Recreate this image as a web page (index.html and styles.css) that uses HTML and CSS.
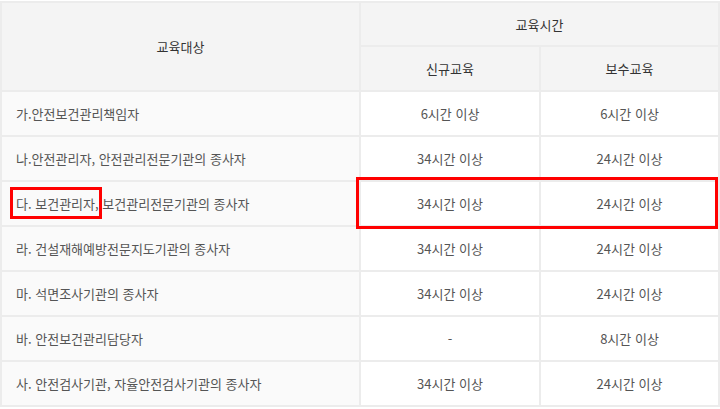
FILE: index.html
```html
<!DOCTYPE html>
<html lang="ko">
<head>
<meta charset="utf-8">
<link rel="stylesheet" href="styles.css">
</head>
<body>
<div class="wrap">
  <table class="edu">
    <colgroup>
      <col class="c-target">
      <col class="c-new">
      <col class="c-keep">
    </colgroup>
    <thead>
      <tr class="h1">
        <th rowspan="2">교육대상</th>
        <th colspan="2">교육시간</th>
      </tr>
      <tr class="h2">
        <th>신규교육</th>
        <th>보수교육</th>
      </tr>
    </thead>
    <tbody>
      <tr><td class="t">가.안전보건관리책임자</td><td>6시간 이상</td><td>6시간 이상</td></tr>
      <tr><td class="t">나.안전관리자, 안전관리전문기관의 종사자</td><td>34시간 이상</td><td>24시간 이상</td></tr>
      <tr><td class="t"><span class="mark">다. 보건관리자,</span> 보건관리전문기관의 종사자</td><td>34시간 이상</td><td>24시간 이상</td></tr>
      <tr><td class="t">라. 건설재해예방전문지도기관의 종사자</td><td>34시간 이상</td><td>24시간 이상</td></tr>
      <tr><td class="t">마. 석면조사기관의 종사자</td><td>34시간 이상</td><td>24시간 이상</td></tr>
      <tr><td class="t">바. 안전보건관리담당자</td><td>-</td><td>8시간 이상</td></tr>
      <tr><td class="t">사. 안전검사기관, 자율안전검사기관의 종사자</td><td>34시간 이상</td><td>24시간 이상</td></tr>
    </tbody>
  </table>
  <div class="row-mark"></div>
</div>
</body>
</html>
```

FILE: styles.css
```css
html, body {
  margin: 0;
  padding: 0;
  background: #ffffff;
}

.wrap {
  position: relative;
  width: 718px;
  padding-top: 1px;
  font-family: "Noto Sans CJK KR", "Noto Sans", sans-serif;
}

.edu {
  width: 718px;
  table-layout: fixed;
  border-collapse: collapse;
  font-size: 13px;
  color: #555555;
}

.c-target { width: 359px; }
.c-new { width: 180px; }
.c-keep { width: 179px; }

.edu th,
.edu td {
  border: 2px solid #ececec;
  padding: 0;
  text-align: center;
  vertical-align: middle;
  font-weight: normal;
}

.edu th {
  background: #f4f4f4;
  color: #333333;
}

.h1 th { height: 42px; }
.h2 th { height: 43px; }

.edu td {
  height: 43px;
  background: #ffffff;
}

.edu td.t {
  text-align: left;
  padding-left: 14px;
  background: #fafafa;
}

.mark {
  position: relative;
}

.mark::after {
  content: "";
  position: absolute;
  left: -6px;
  right: -3px;
  top: -7px;
  bottom: -6px;
  border: 3px solid #ff0000;
}

.row-mark {
  position: absolute;
  left: 356px;
  top: 177px;
  width: 356px;
  height: 46px;
  border: 3px solid #ff0000;
}
```
